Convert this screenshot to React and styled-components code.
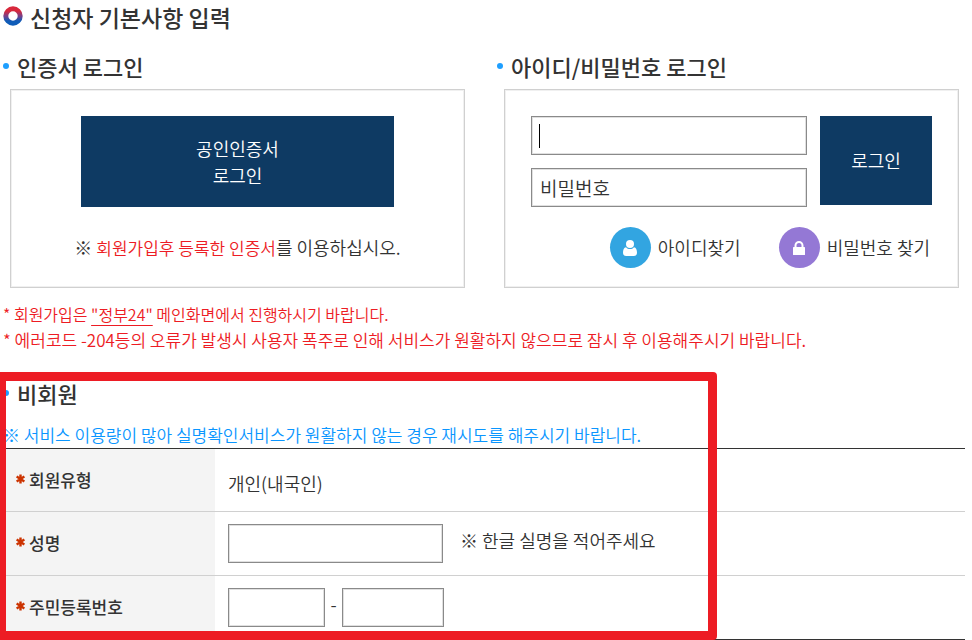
import React, { useState } from "react";
import styled, { createGlobalStyle } from "styled-components";

const App = () => {
  const [userId, setUserId] = useState("");
  const [password, setPassword] = useState("");

  return (
    <Page>
      <GlobalStyle />
      <Title>
        <RingIcon />
        신청자 기본사항 입력
      </Title>

      <LoginColumns>
        <section>
          <SubTitle>인증서 로그인</SubTitle>
          <Box>
            <CertButton type="button">
              공인인증서
              <br />
              로그인
            </CertButton>
            <CertNotice>
              ※ <em>회원가입후 등록한 인증서</em>를 이용하십시오.
            </CertNotice>
          </Box>
        </section>

        <section>
          <SubTitle>아이디/비밀번호 로그인</SubTitle>
          <Box>
            <LoginForm onSubmit={(e) => e.preventDefault()}>
              <Fields>
                <Field>
                  <TextInput
                    aria-label="아이디"
                    value={userId}
                    onChange={(e) => setUserId(e.target.value)}
                  />
                  {!userId && <Caret />}
                </Field>
                <Field>
                  <TextInput
                    type="password"
                    aria-label="비밀번호"
                    placeholder="비밀번호"
                    value={password}
                    onChange={(e) => setPassword(e.target.value)}
                  />
                </Field>
              </Fields>
              <LoginButton type="submit">로그인</LoginButton>
            </LoginForm>
            <FindLinks>
              <FindLink href="#find-id">
                <Circle $color="#32a5e1">
                  <UserIcon />
                </Circle>
                아이디찾기
              </FindLink>
              <FindLink href="#find-password">
                <Circle $color="#9478d5">
                  <LockIcon />
                </Circle>
                비밀번호 찾기
              </FindLink>
            </FindLinks>
          </Box>
        </section>
      </LoginColumns>

      <Notices>
        <Notice $size="16px">
          * 회원가입은 <a href="#gov24">"정부24"</a> 메인화면에서 진행하시기
          바랍니다.
        </Notice>
        <Notice $size="17px">
          * 에러코드 -204등의 오류가 발생시 사용자 폭주로 인해 서비스가
          원활하지 않으므로 잠시 후 이용해주시기 바랍니다.
        </Notice>
      </Notices>

      <GuestSection>
        <SubTitle>비회원</SubTitle>
        <GuestNotice>
          ※ 서비스 이용량이 많아 실명확인서비스가 원활하지 않는 경우 재시도를
          해주시기 바랍니다.
        </GuestNotice>
        <Table>
          <tbody>
            <tr>
              <th scope="row">
                <RequiredMark />
                회원유형
              </th>
              <TypeCell>개인(내국인)</TypeCell>
            </tr>
            <tr>
              <th scope="row">
                <RequiredMark />
                <label htmlFor="name">성명</label>
              </th>
              <td>
                <Cell>
                  <TextInput id="name" $width="215px" />
                  <Hint>※ 한글 실명을 적어주세요</Hint>
                </Cell>
              </td>
            </tr>
            <tr>
              <th scope="row">
                <RequiredMark />
                <label htmlFor="rrn">주민등록번호</label>
              </th>
              <td>
                <Cell>
                  <TextInput id="rrn" maxLength={6} $width="97px" />
                  <Dash>-</Dash>
                  <TextInput
                    type="password"
                    aria-label="주민등록번호 뒷자리"
                    maxLength={7}
                    $width="102px"
                  />
                </Cell>
              </td>
            </tr>
          </tbody>
        </Table>
        <Highlight />
      </GuestSection>
    </Page>
  );
};

export default App;

const RingIcon = () => (
  <svg width="20" height="20" viewBox="0 0 20 20" aria-hidden="true">
    <defs>
      <linearGradient id="ring" x1="0" y1="0" x2="0" y2="1">
        <stop offset="0.15" stopColor="#d8283c" />
        <stop offset="0.5" stopColor="#7a4088" />
        <stop offset="0.85" stopColor="#0f5cb8" />
      </linearGradient>
    </defs>
    <circle cx="10" cy="10" r="7.2" fill="none" stroke="url(#ring)" strokeWidth="5" />
  </svg>
);

const UserIcon = () => (
  <svg width="14" height="16" viewBox="0 0 14 16" fill="#fff" aria-hidden="true">
    <circle cx="7" cy="4" r="4" />
    <path d="M3 7.2C4 8.5 5.4 9.1 7 9.1s3-.6 4-1.9c2.1.3 3 2.7 3 5.5 0 2-1.2 3.3-3 3.3H3c-1.800 0-3-1.300-3-3.300C0 9.900.9 7.500 3 7.200z" />
  </svg>
);

const LockIcon = () => (
  <svg width="12" height="14" viewBox="0 0 12 14" fill="none" aria-hidden="true">
    <rect y="6" width="12" height="8" rx="0.6" fill="#fff" />
    <path d="M2.500 7V4.500a3.500 3.500 0 0 1 7 0V7" stroke="#fff" strokeWidth="2" />
  </svg>
);

const RequiredMark = () => (
  <svg width="9" height="10" viewBox="0 0 9 10" role="img" aria-label="필수">
    <path
      d="M4.500 .5v9M.6 2.500l7.800 5M8.400 2.500L.6 7.500"
      stroke="#cc3300"
      strokeWidth="2.4"
    />
  </svg>
);

const GlobalStyle = createGlobalStyle`
  * {
    box-sizing: border-box;
  }

  body {
    margin: 0;
    background: #ffffff;
    color: #333333;
    font-family: "Noto Sans CJK KR", sans-serif;
    font-size: 18px;
    font-weight: 350;
    line-height: 27px;
  }

  h1, h2, p {
    margin: 0;
  }

  button, input {
    font: inherit;
    color: inherit;
  }
`;

const Page = styled.main`
  padding-top: 2px;
`;

const Title = styled.h1`
  display: flex;
  align-items: center;
  gap: 7px;
  padding-left: 3px;
  font-size: 23px;
  font-weight: 500;
  line-height: 30px;

  svg {
    margin-bottom: 2px;
  }
`;

const LoginColumns = styled.div`
  display: grid;
  grid-template-columns: 1fr 1fr;
  gap: 29px;
  padding: 18px 13px 0 0;
`;

const SubTitle = styled.h2`
  display: flex;
  align-items: center;
  gap: 8px;
  padding-left: 3px;
  font-size: 22px;
  font-weight: 500;
  line-height: 32px;

  &::before {
    content: "";
    width: 6px;
    height: 6px;
    border-radius: 50%;
    background: #1e9fff;
  }
`;

const Box = styled.div`
  height: 199px;
  margin: 7px 0 0 10px;
  padding: 26px;
  border: 1px solid #d0d0d0;
  box-shadow: inset 0 0 0 1px #f0f0f0;
`;

const CertButton = styled.button`
  display: block;
  width: 313px;
  max-width: 100%;
  height: 91px;
  margin: 0 auto;
  border: 0;
  background: #0e3a63;
  color: #ffffff;
  cursor: pointer;
`;

const CertNotice = styled.p`
  margin-top: 27px;
  text-align: center;

  em {
    color: #ed1c24;
    font-size: 17px;
    font-style: normal;
  }
`;

const LoginForm = styled.form`
  display: flex;
  gap: 13px;
`;

const Fields = styled.div`
  flex: 1;
  display: flex;
  flex-direction: column;
  gap: 13px;
`;

const Field = styled.div`
  position: relative;
  display: flex;
`;

const TextInput = styled.input`
  width: ${({ $width }) => $width || "100%"};
  height: 39px;
  padding: 0 8px;
  border: 1px solid #8a8a8a;
  border-radius: 0;
  box-shadow: inset 0 0 0 1px #e0e0e0;
  background: #ffffff;
  outline: none;

  &::placeholder {
    color: #333333;
    opacity: 1;
    font-size: 19px;
  }
`;

const Caret = styled.span`
  position: absolute;
  top: 8px;
  left: 8px;
  width: 1px;
  height: 24px;
  background: #000000;
`;

const LoginButton = styled.button`
  width: 112px;
  height: 89px;
  border: 0;
  background: #0e3a63;
  color: #ffffff;
  cursor: pointer;
`;

const FindLinks = styled.div`
  display: flex;
  justify-content: flex-end;
  gap: 38px;
  margin-top: 20px;
  padding-right: 2px;
`;

const FindLink = styled.a`
  display: flex;
  align-items: center;
  gap: 7px;
  color: inherit;
  text-decoration: none;
`;

const Circle = styled.span`
  display: flex;
  align-items: center;
  justify-content: center;
  width: 41px;
  height: 41px;
  border-radius: 50%;
  background: ${({ $color }) => $color};
`;

const Notices = styled.div`
  padding: 14px 0 0 3px;
  color: #ed1c24;

  a {
    color: inherit;
    text-underline-offset: 4px;
  }
`;

const Notice = styled.p`
  font-size: ${({ $size }) => $size};
  line-height: 25px;
`;

const GuestSection = styled.section`
  position: relative;
  margin-top: 25px;
  padding-right: 7px;
`;

const GuestNotice = styled.p`
  padding: 14px 0 1px 3px;
  color: #0a96ff;
  font-size: 17px;
  line-height: 24px;
`;

const Table = styled.table`
  width: 100%;
  border-collapse: collapse;
  border-top: 1px solid #333333;
  border-bottom: 1px solid #333333;

  th,
  td {
    height: 64px;
    padding: 0 13px;
    text-align: left;
  }

  tr:first-child th {
    height: 63px;
  }

  th {
    width: 215px;
    padding: 0 0 2px 16px;
    background: #f4f4f4;
    font-size: 17px;
    font-weight: 500;
  }

  th svg {
    margin: 0 4px 3px 0;
  }

  tr + tr {
    border-top: 1px solid #d0d0d0;
  }
`;

const TypeCell = styled.td`
  && {
    height: 63px;
    padding-top: 6px;
  }
`;

const Cell = styled.div`
  display: flex;
  align-items: center;
`;

const Hint = styled.span`
  margin-left: 17px;
  padding-bottom: 6px;
`;

const Dash = styled.span`
  width: 17px;
  padding-bottom: 6px;
  text-align: center;
`;

// marks the part of the form that guests have to fill in
const Highlight = styled.div`
  position: absolute;
  top: -5px;
  bottom: 0;
  left: -3px;
  width: 720px;
  max-width: 100%;
  border: 9px solid #ed1c24;
  border-radius: 4px;
  pointer-events: none;
`;
